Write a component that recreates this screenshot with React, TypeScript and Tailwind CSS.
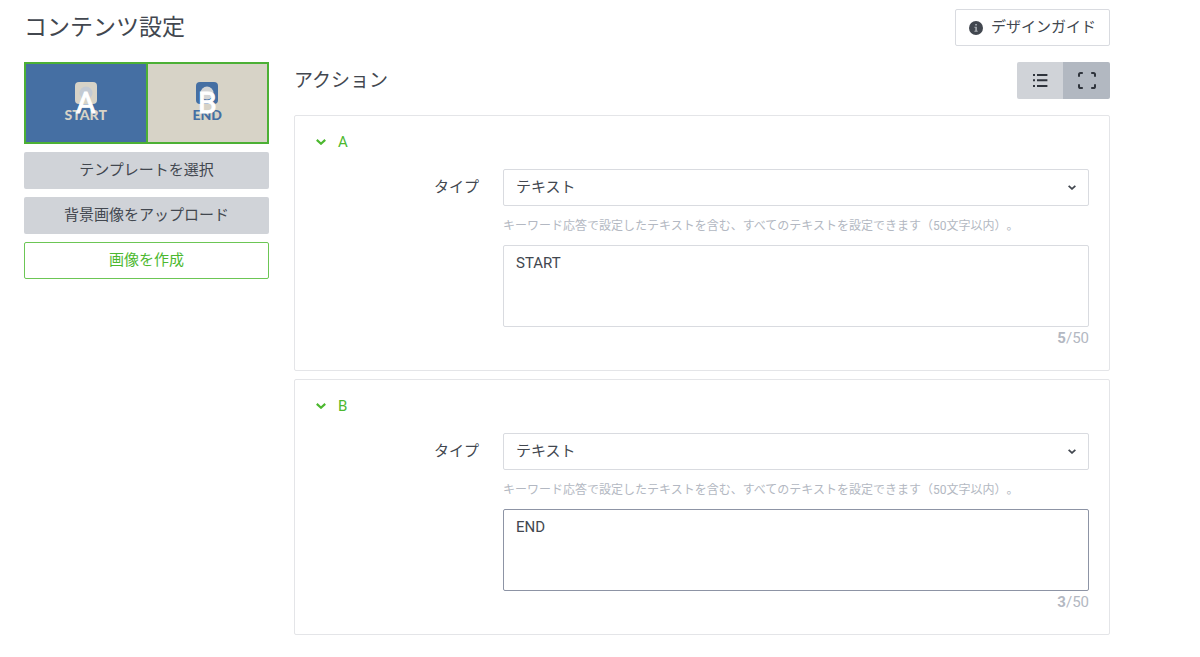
import { useState } from "react";
import clsx from "clsx";

interface Action {
  id: string;
  type: string;
  text: string;
}

const MAX_LENGTH = 50;

const initialActions: Action[] = [
  { id: "A", type: "text", text: "START" },
  { id: "B", type: "text", text: "END" },
];

const InfoIcon = () => (
  <svg viewBox="0 0 14 14" className="h-[14px] w-[14px]" aria-hidden="true">
    <circle cx="7" cy="7" r="7" fill="#42474f" />
    <path d="M6.2 3h1.7v1.5H6.2zM5.4 5.7h2.5v4h.8v1.1H5.4V9.7h.9V6.8h-.9z" fill="#a9adb3" />
  </svg>
);

const ListIcon = () => (
  <svg viewBox="0 0 16 16" className="h-4 w-4" fill="#2f343c" aria-hidden="true">
    <path d="M1 1h2v2H1zM1 6.2h2v2H1zM1 12h2v2H1zM5 1h10.4v2H5zM5 6.2h10.4v2H5zM5 12h10.4v2H5z" />
  </svg>
);

const ExpandIcon = () => (
  <svg viewBox="0 0 18 18" className="h-[18px] w-[18px]" fill="none" stroke="#2f343c" strokeWidth="2" aria-hidden="true">
    <path d="M1 4.8V2.6Q1 1 2.6 1h2.2M13.2 1h2.2Q17 1 17 2.6v2.2M17 12.2v2.2q0 1.6-1.6 1.6h-2.2M4.8 16H2.6Q1 16 1 14.4v-2.2" />
  </svg>
);

const ChevronIcon = ({ className }: { className?: string }) => (
  <svg viewBox="0 0 10 6" className={className} fill="none" stroke="currentColor" strokeWidth="2.2" aria-hidden="true">
    <path d="M.8 .9L5 4.7 9.2 .9" />
  </svg>
);

const Tile = ({ letter, caption, inverted }: { letter: string; caption: string; inverted?: boolean }) => (
  <div
    className={clsx(
      "relative flex flex-1 flex-col items-center pt-[18px]",
      inverted ? "bg-[#d7d3c7] text-[#456fa3]" : "bg-[#456fa3] text-[#d7d3c7]"
    )}
  >
    <svg viewBox="0 0 22 22" className="h-[22px] w-[22px]" aria-hidden="true">
      <rect width="22" height="22" rx="4" fill="currentColor" />
      <circle cx="11" cy="11" r="6.5" fill={inverted ? "#d3d5d6" : "#c3cad3"} />
    </svg>
    <span className="mt-[3px] font-[Lato] text-[14px] leading-4 font-black">{caption}</span>
    <span className="absolute inset-0 flex items-center justify-center text-[30px] leading-none text-white [-webkit-text-stroke:1px_white]">
      {letter}
    </span>
  </div>
);

interface ActionCardProps {
  action: Action;
  active: boolean;
  onFocus: () => void;
  onChange: (next: Action) => void;
}

const ActionCard = ({ action, active, onFocus, onChange }: ActionCardProps) => {
  const [open, setOpen] = useState(true);

  return (
    <section className="rounded-xs border border-[#e4e5e8] px-5 pt-[14px] pb-[21px]">
      <button
        type="button"
        aria-expanded={open}
        onClick={() => setOpen(!open)}
        className="flex h-6 items-center gap-3 text-[#4cb82f]"
      >
        <ChevronIcon className={clsx("ml-px h-[6px] w-[10px]", !open && "-rotate-90")} />
        {action.id}
      </button>

      {open && (
        <div className="mt-[15px] flex gap-6">
          <label htmlFor={`type-${action.id}`} className="h-[37px] w-[164px] text-right leading-[37px]">
            タイプ
          </label>
          <div className="min-w-0 flex-1">
            <div className="relative">
              <select
                id={`type-${action.id}`}
                value={action.type}
                onChange={(e) => onChange({ ...action, type: e.target.value })}
                className="block h-[37px] w-full appearance-none rounded-xs border border-[#d9dbe0] bg-white px-3 outline-none"
              >
                <option value="text">テキスト</option>
                <option value="link">リンク</option>
              </select>
              <ChevronIcon className="pointer-events-none absolute top-4 right-[13px] h-[5px] w-2" />
            </div>
            <p
              id={`help-${action.id}`}
              className="mt-[9px] mb-[7px] text-[12px] leading-[23px] text-[#b3b8c2] [text-spacing-trim:space-all]"
            >
              キーワード応答で設定したテキストを含む、すべてのテキストを設定できます（50文字以内）。
            </p>
            <textarea
              aria-label={`${action.id} テキスト`}
              aria-describedby={`help-${action.id}`}
              maxLength={MAX_LENGTH}
              value={action.text}
              onFocus={onFocus}
              onChange={(e) => onChange({ ...action, text: e.target.value })}
              className={clsx(
                "block h-[82px] w-full resize-none rounded-xs border px-3 py-[6px] leading-[22px] outline-none",
                active ? "border-[#8d94a5]" : "border-[#d9dbe0]"
              )}
            />
            <p className="text-right leading-[22px] text-[#b3b8c2]">
              <b>{action.text.length}</b>/{MAX_LENGTH}
            </p>
          </div>
        </div>
      )}
    </section>
  );
};

const App = () => {
  const [actions, setActions] = useState(initialActions);
  const [activeId, setActiveId] = useState("B");
  const [view, setView] = useState("expand");

  const updateAction = (next: Action) => {
    setActions(actions.map((a) => (a.id === next.id ? next : a)));
  };

  return (
    <div className="min-h-screen bg-white pt-[9px] pr-[90px] pb-[22px] pl-6 font-[Roboto,'Noto_Sans_CJK_JP',sans-serif] text-[15px] text-[#42474f]">
      <header className="flex items-center justify-between">
        <h1 className="text-[23px] leading-8">コンテンツ設定</h1>
        <button
          type="button"
          className="flex h-[37px] items-center gap-2 rounded-xs border border-[#d9dbe0] px-[13px]"
        >
          <InfoIcon />
          デザインガイド
        </button>
      </header>

      <div className="mt-4 flex items-start gap-[25px]">
        <aside className="flex w-[245px] shrink-0 flex-col gap-2">
          <div className="flex h-[82px] gap-[2px] border-2 border-[#4cb035] bg-[#4cb035]">
            <Tile letter="A" caption="START" />
            <Tile letter="B" caption="END" inverted />
          </div>
          <button type="button" className="h-[37px] rounded-xs bg-[#d0d3d8]">
            テンプレートを選択
          </button>
          <button type="button" className="h-[37px] rounded-xs bg-[#d0d3d8]">
            背景画像をアップロード
          </button>
          <button type="button" className="h-[37px] rounded-xs border border-[#6cc655] text-[#4cb82f]">
            画像を作成
          </button>
        </aside>

        <main className="min-w-0 flex-1">
          <div className="mb-4 flex h-[37px] items-center justify-between">
            <h2 className="text-[19px] leading-7">アクション</h2>
            <div className="flex h-full overflow-hidden rounded-xs">
              <button
                type="button"
                aria-label="リスト表示"
                onClick={() => setView("list")}
                className={clsx(
                  "flex w-[46px] items-center justify-center",
                  view === "list" ? "bg-[#b2b8c1]" : "bg-[#d0d3d8]"
                )}
              >
                <ListIcon />
              </button>
              <button
                type="button"
                aria-label="展開表示"
                onClick={() => setView("expand")}
                className={clsx(
                  "flex w-[47px] items-center justify-center",
                  view === "expand" ? "bg-[#b2b8c1]" : "bg-[#d0d3d8]"
                )}
              >
                <ExpandIcon />
              </button>
            </div>
          </div>

          <div className="flex flex-col gap-2">
            {actions.map((action) => (
              <ActionCard
                key={action.id}
                action={action}
                active={action.id === activeId}
                onFocus={() => setActiveId(action.id)}
                onChange={updateAction}
              />
            ))}
          </div>
        </main>
      </div>
    </div>
  );
};

export default App;
